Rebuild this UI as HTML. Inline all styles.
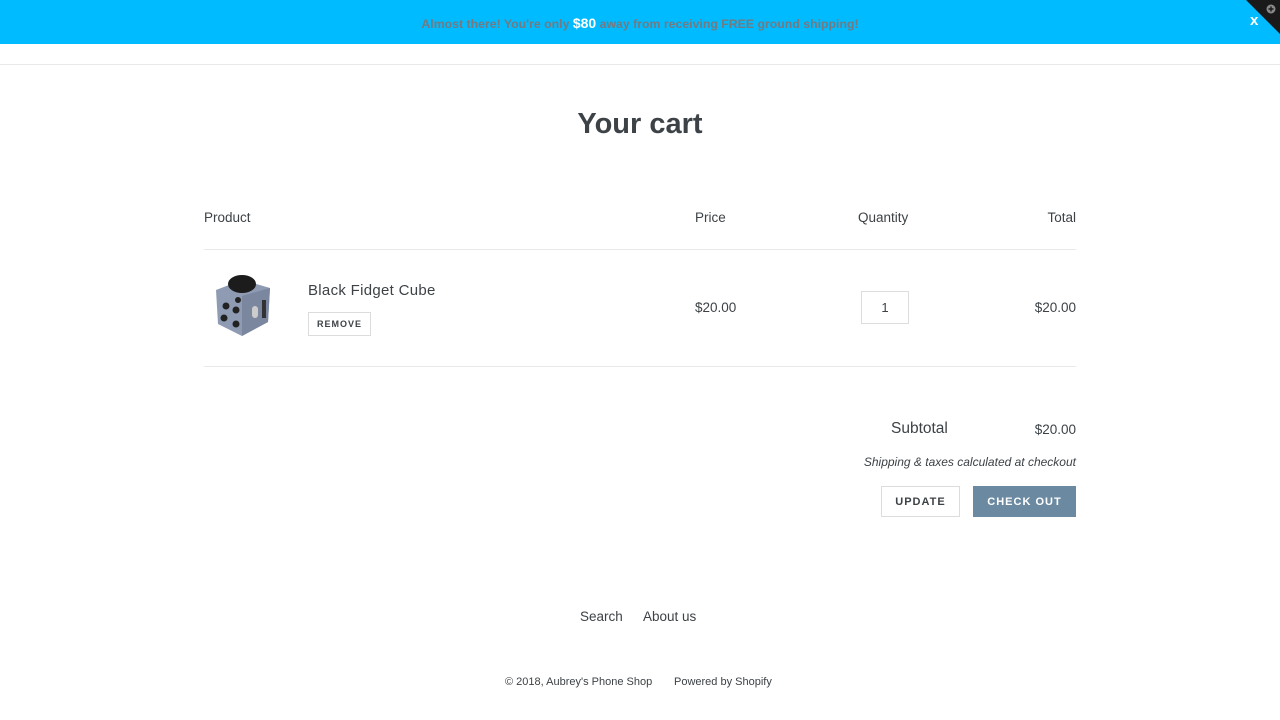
<!DOCTYPE html>
<html><head><style>
body{margin:0;width:1280px;height:720px;position:relative;font-family:"Liberation Sans",sans-serif;color:#3d4246;background:#fff;overflow:hidden}
.a{position:absolute}
.r{right:204px;text-align:right}
.bar{left:0;top:0;width:1280px;height:44px;background:#00bbff}
.bar .t{width:100%;text-align:center;top:15px;font-size:12.3px;font-weight:bold;color:#737a80}
.bar .t b{color:#fff;font-size:14px}
.line{height:1px;background:#e8e9eb}
.btn{border:1px solid #dcdcdc;font-weight:bold;letter-spacing:1px;text-align:center;box-sizing:border-box}
</style></head><body>
<div class="a bar"><div class="a t">Almost there! You're only <b>$80</b> away from receiving FREE ground shipping!</div>
<div class="a" style="left:1250px;top:12px;color:#fff;font-weight:bold;font-size:15px">x</div>
<svg class="a" style="left:1246px;top:0" width="34" height="34"><polygon points="0,0 34,0 34,34" fill="#1a1a1a"/><circle cx="25" cy="9" r="4.5" fill="#888"/><path d="M22.5 9h5M25 6.5v5" stroke="#1a1a1a" stroke-width="1.4"/></svg></div>
<div class="a line" style="left:0;top:64px;width:1280px"></div>
<div class="a" style="width:1280px;text-align:center;top:108px;font-size:29px;font-weight:bold">Your cart</div>
<div class="a" style="left:204px;top:210px;font-size:13.5px">Product</div>
<div class="a" style="left:695px;top:210px;font-size:13.5px">Price</div>
<div class="a" style="left:858px;top:210px;font-size:13.5px">Quantity</div>
<div class="a r" style="top:210px;font-size:13.5px">Total</div>
<div class="a line" style="left:204px;top:249px;width:872px"></div>
<svg class="a" style="left:212px;top:272px" width="62" height="66">
<path d="M4 18 L30 8 L58 16 L56 50 L30 64 L6 52Z" fill="#8e9bb3"/>
<path d="M30 24 L58 16 L56 50 L30 64Z" fill="#7a879f"/>
<ellipse cx="30" cy="12" rx="14" ry="9" fill="#1c1c1c"/>
<circle cx="14" cy="34" r="3.5" fill="#222"/><circle cx="24" cy="38" r="3.5" fill="#222"/><circle cx="12" cy="46" r="3.5" fill="#222"/><circle cx="24" cy="52" r="3.5" fill="#222"/><circle cx="26" cy="28" r="3" fill="#222"/>
<rect x="40" y="34" width="6" height="12" rx="3" fill="#ccc"/><rect x="50" y="28" width="4" height="18" fill="#333"/>
</svg>
<div class="a" style="left:308px;top:282px;font-size:15px;letter-spacing:0.3px">Black Fidget Cube</div>
<div class="a btn" style="left:308px;top:312px;width:63px;height:24px;font-size:9px;line-height:22px">REMOVE</div>
<div class="a" style="left:695px;top:300px;font-size:13.5px">$20.00</div>
<div class="a" style="left:861px;top:291px;width:48px;height:33px;border:1px solid #ddd;box-sizing:border-box;text-align:center;line-height:31px;font-size:13px">1</div>
<div class="a r" style="top:300px;font-size:13.5px">$20.00</div>
<div class="a line" style="left:204px;top:366px;width:872px"></div>
<div class="a" style="left:891px;top:420px;font-size:15.5px">Subtotal</div>
<div class="a r" style="top:422px;font-size:13.5px">$20.00</div>
<div class="a r" style="top:455px;font-size:12px;font-style:italic">Shipping &amp; taxes calculated at checkout</div>
<div class="a btn" style="left:881px;top:486px;width:79px;height:31px;font-size:11px;line-height:30px">UPDATE</div>
<div class="a btn" style="left:973px;top:486px;width:103px;height:31px;font-size:11px;line-height:30px;background:#6b8aa1;border-color:#6b8aa1;color:#fff">CHECK OUT</div>
<div class="a" style="left:580px;top:609px;font-size:13.5px">Search</div>
<div class="a" style="left:643px;top:609px;font-size:13.5px">About us</div>
<div class="a" style="left:505px;top:676px;font-size:11px">© 2018, Aubrey's Phone Shop</div>
<div class="a" style="left:674px;top:676px;font-size:11px">Powered by Shopify</div>
</body></html>
